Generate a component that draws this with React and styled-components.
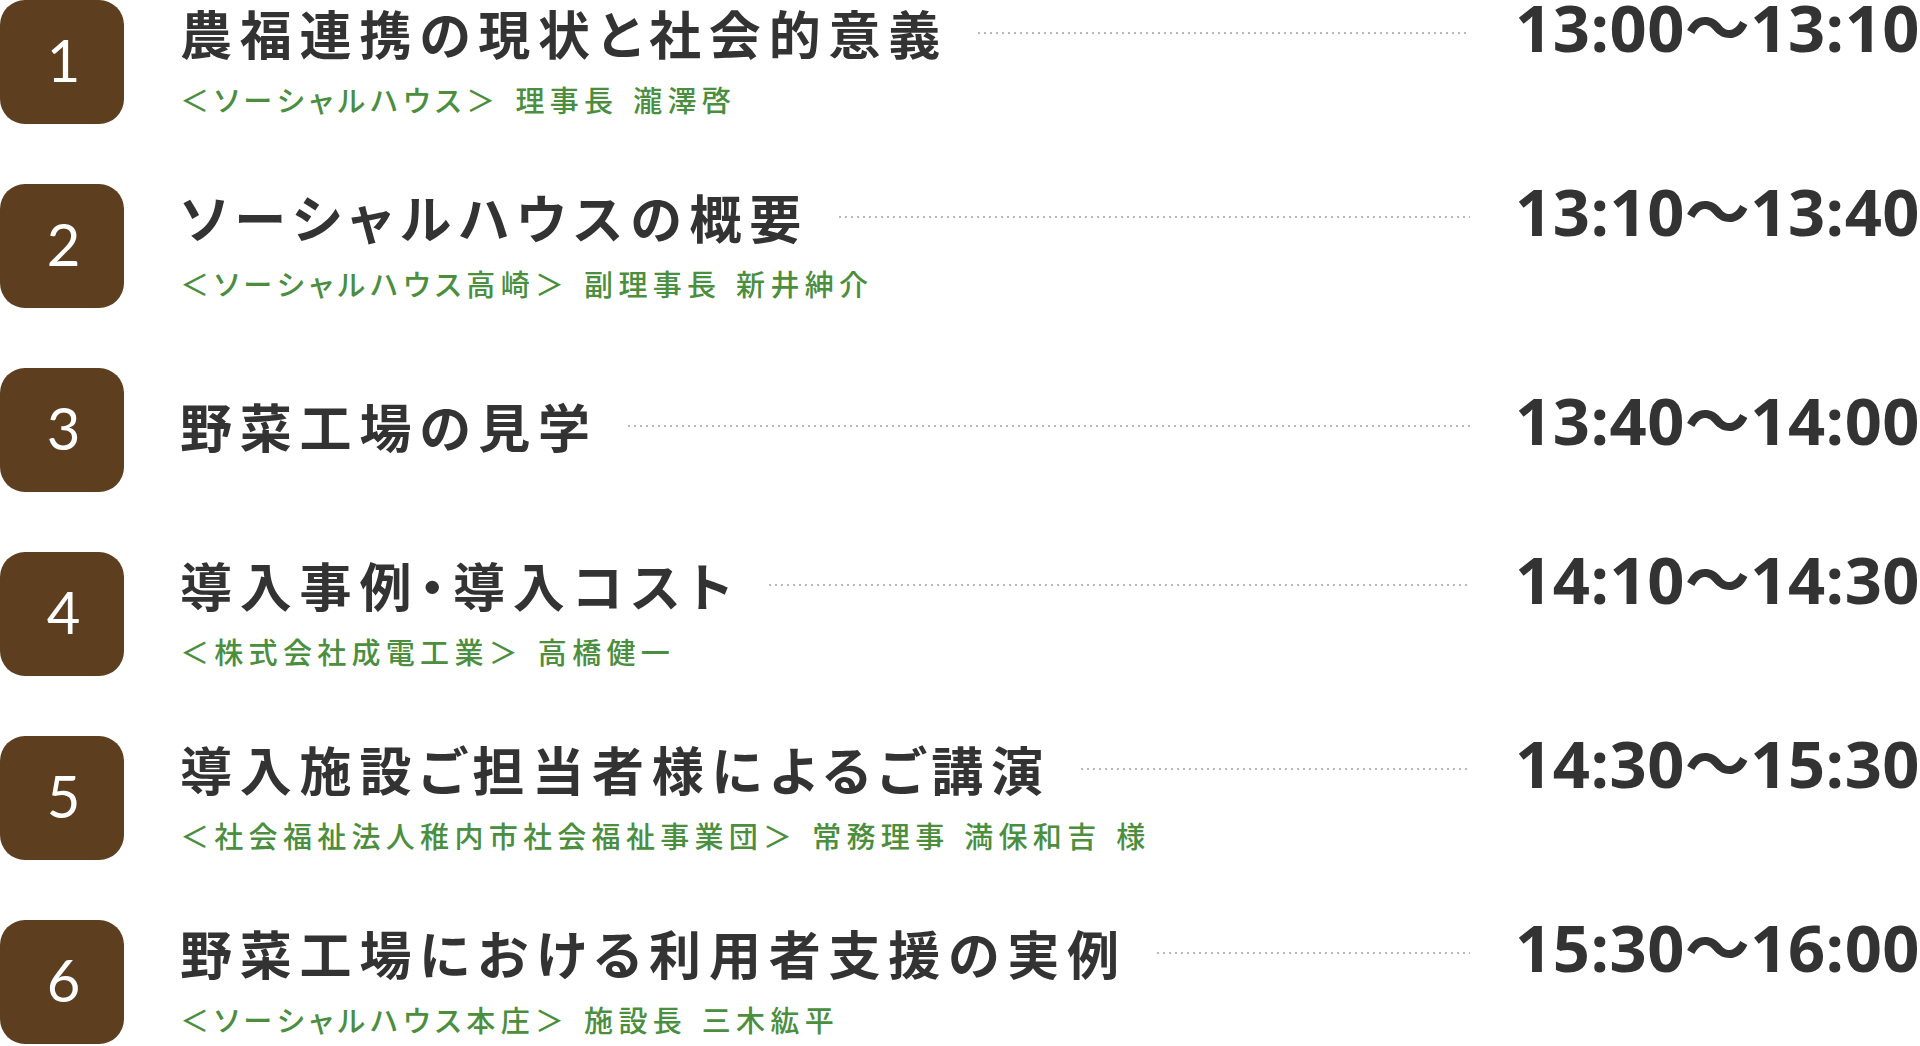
import React from 'react';
import styled, { createGlobalStyle } from 'styled-components';

const GlobalStyle = createGlobalStyle`
  html, body {
    margin: 0;
    padding: 0;
    background: #fff;
  }
  body {
    font-family: "Noto Sans CJK JP", "Noto Sans", sans-serif;
  }
`;

// program rows
const items = [
  { no: 1, title: '農福連携の現状と社会的意義', sub: '＜ソーシャルハウス＞ 理事長 瀧澤啓', time: '13:00〜13:10' },
  { no: 2, title: 'ソーシャルハウスの概要', sub: '＜ソーシャルハウス高崎＞ 副理事長 新井紳介', time: '13:10〜13:40' },
  { no: 3, title: '野菜工場の見学', sub: null, time: '13:40〜14:00' },
  { no: 4, title: '導入事例・導入コスト', sub: '＜株式会社成電工業＞ 高橋健一', time: '14:10〜14:30' },
  { no: 5, title: '導入施設ご担当者様によるご講演', sub: '＜社会福祉法人稚内市社会福祉事業団＞ 常務理事 満保和吉 様', time: '14:30〜15:30' },
  { no: 6, title: '野菜工場における利用者支援の実例', sub: '＜ソーシャルハウス本庄＞ 施設長 三木紘平', time: '15:30〜16:00' },
];

const Page = styled.div`
  width: 1920px;
  display: flex;
  flex-direction: column;
  gap: 60px;
`;

const Row = styled.div`
  display: grid;
  grid-template-columns: 124px 1fr;
  column-gap: 56px;
  min-height: 124px;
`;

const NumBox = styled.div`
  width: 124px;
  height: 124px;
  box-sizing: border-box;
  padding: 0 0 5px 3px;
  border-radius: 25px;
  background: #5d3e1e;
  color: #fff;
  display: flex;
  align-items: center;
  justify-content: center;
  font-family: "Lato", "Noto Sans", sans-serif;
  font-size: 58px;
  font-weight: 400;
  line-height: 1;
`;

const Body = styled.div`
  display: flex;
  flex-direction: column;
  justify-content: center;
  min-width: 0;
`;

const Head = styled.div`
  display: flex;
  align-items: center;
  height: 70px;
  box-sizing: border-box;
  padding-bottom: 8px;
`;

const Title = styled.h2`
  margin: 0;
  font-family: "Noto Sans CJK JP", "Noto Sans", sans-serif;
  font-size: 52px;
  font-weight: 700;
  letter-spacing: 7.8px;
  line-height: 62px;
  color: #333;
  white-space: nowrap;
  font-feature-settings: "palt";
`;

const Dots = styled.span`
  flex: 1;
  height: 2px;
  margin: 0 45px 0 30px;
  background-image: linear-gradient(to right, #b8b8b8 2px, transparent 2px);
  background-size: 6px 2px;
  background-repeat: repeat-x;
`;

const Time = styled.div`
  font-family: "Open Sans", "Noto Sans CJK JP", sans-serif;
  font-size: 65px;
  font-weight: 700;
  line-height: 50px;
  letter-spacing: 0.5px;
  color: #333;
  white-space: nowrap;
  padding-bottom: 12px;
`;

const Sub = styled.p`
  margin: 4px 0 0;
  font-family: "Noto Sans CJK JP", "Noto Sans", sans-serif;
  font-size: 29px;
  font-weight: 500;
  letter-spacing: 5.3px;
  word-spacing: 3px;
  line-height: 46px;
  color: #4a8e3e;
  white-space: nowrap;
  font-feature-settings: "palt";
`;

const App = () => {
  return (
    <>
      <GlobalStyle />
      <Page>
        {items.map((it) => (
          <Row key={it.no}>
            <NumBox>{it.no}</NumBox>
            <Body>
              <Head>
                <Title>{it.title}</Title>
                <Dots />
                <Time>{it.time}</Time>
              </Head>
              {it.sub && <Sub>{it.sub}</Sub>}
            </Body>
          </Row>
        ))}
      </Page>
    </>
  );
};

export default App;
